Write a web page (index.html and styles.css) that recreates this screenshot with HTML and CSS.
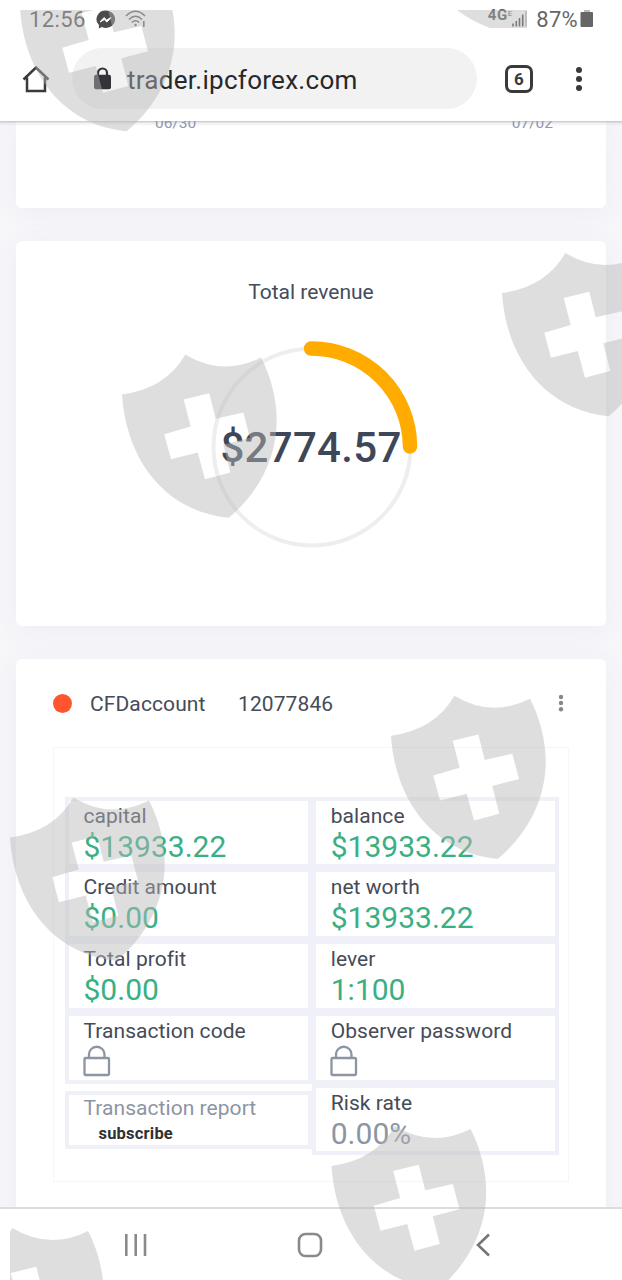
FILE: index.html
```
<!DOCTYPE html>
<html lang="en">
<head>
    <meta charset="UTF-8">
    <meta name="viewport" content="width=device-width, initial-scale=1.0">
    <title>Trader</title>
    <link rel="stylesheet" href="styles.css">
</head>
<body>
    <div class="screen">
        <!-- Status bar -->
        <div class="status-bar">
            <span class="clock">12:56</span>
            <svg class="messenger" width="19" height="19" viewBox="0 0 19 19">
                <path d="M9.5 0.5a9 8.7 0 0 0-6.6 14.6V18.5l3-1.6a9 8.7 0 1 0 3.6-16.4z" fill="#4c4c4c"/>
                <path d="M4 12l4-4.4 2.6 2.5L15 7.5l-4 4.6-2.7-2.500z" fill="#fff" stroke="#fff" stroke-width="1"/>
            </svg>
            <svg class="wifi" width="21" height="18" viewBox="0 0 21 18" fill="none" stroke="#666" stroke-width="1.600">
                <path d="M1 6q9.500-9.500 19 0M4 9.500q6.500-6.500 13 0M6.800 12.500q3.700-3.500 7.400 0"/>
                <circle cx="10.500" cy="15" r="1.200" fill="#666" stroke="none"/>
                <path d="M18.800 11v6"/>
            </svg>
            <span class="status-right">
                <span class="network"><b>4G</b><i>E</i></span>
                <svg width="15" height="16" viewBox="0 0 15 16" stroke="#484848" stroke-width="1.600">
                    <path d="M1 12.500V15.500M4.300 10V15.500M7.500 7V15.500M10.700 3.500V15.500"/>
                    <path d="M14 0V15.500" stroke="#b5b5b5"/>
                </svg>
                <span class="percent">87%</span>
                <svg width="14" height="18" viewBox="0 0 14 18">
                    <path d="M4 0h6v2H4z" fill="#bbb"/>
                    <rect x="0.500" y="2" width="12.500" height="15" rx="1" fill="#666"/>
                </svg>
            </span>
        </div>

        <!-- Browser toolbar -->
        <header class="toolbar">
            <svg class="home" width="28" height="28" viewBox="0 0 28 28" fill="none" stroke="#3a3a3a" stroke-width="2.500">
                <path d="M1.500 14.500L14 2.500l12.500 12M5 12.500V26h18V12.500"/>
            </svg>
            <div class="address">
                <svg width="17" height="23" viewBox="0 0 17 23">
                    <path d="M4 9V6a4.500 4.500 0 0 1 9 0v3" fill="none" stroke="#333438" stroke-width="2.200"/>
                    <rect x="0" y="7.700" width="17" height="14.500" rx="2" fill="#333438"/>
                </svg>
                <span class="url">trader.ipcforex.com</span>
            </div>
            <span class="tabs">6</span>
            <svg class="more" width="6" height="26" viewBox="0 0 6 26" fill="#3a3a3a">
                <circle cx="3" cy="3" r="3"/><circle cx="3" cy="12" r="3"/><circle cx="3" cy="21" r="3"/>
            </svg>
        </header>

        <main class="content">
            <section class="card chart-card">
                <span>06/30</span>
                <span>07/02</span>
            </section>

            <section class="card revenue-card">
                <h2>Total revenue</h2>
                <div class="ring">
                    <svg width="216" height="216" viewBox="0 0 216 216" fill="none">
                        <circle cx="108" cy="108" r="98.500" stroke="#eeeef0" stroke-width="4"/>
                        <path d="M107 9.500A98.500 98.500 0 0 1 206 107.500" stroke="#ffab00" stroke-width="14.500" stroke-linecap="round"/>
                    </svg>
                    <strong>$2774.57</strong>
                </div>
            </section>

            <section class="card account-card">
                <div class="account-head">
                    <span class="dot"></span>
                    <span class="account-type">CFDaccount</span>
                    <span>12077846</span>
                    <svg width="6" height="18" viewBox="0 0 6 18" fill="#87888d">
                        <circle cx="3" cy="3" r="2.200"/><circle cx="3" cy="9" r="2.200"/><circle cx="3" cy="15.200" r="2.200"/>
                    </svg>
                </div>
                <div class="account-box">
                    <div class="column">
                        <div class="cell"><span>capital</span><b>$13933.22</b></div>
                        <div class="cell"><span>Credit amount</span><b>$0.00</b></div>
                        <div class="cell"><span>Total profit</span><b>$0.00</b></div>
                        <div class="cell">
                            <span>Transaction code</span>
                            <svg class="lock" width="28" height="32" viewBox="0 0 28 32" fill="none" stroke="#8c95a3" stroke-width="2.300">
                                <rect x="1.500" y="13" width="24.500" height="17" rx="1"/>
                                <path d="M6 13V9.500a7.750 7.750 0 0 1 15.500 0V13"/>
                            </svg>
                        </div>
                        <div class="cell report"><span>Transaction report</span><a>subscribe</a></div>
                    </div>
                    <div class="column">
                        <div class="cell"><span>balance</span><b>$13933.22</b></div>
                        <div class="cell"><span>net worth</span><b>$13933.22</b></div>
                        <div class="cell"><span>lever</span><b>1:100</b></div>
                        <div class="cell">
                            <span>Observer password</span>
                            <svg class="lock" width="28" height="32" viewBox="0 0 28 32" fill="none" stroke="#8c95a3" stroke-width="2.300">
                                <rect x="1.500" y="13" width="24.500" height="17" rx="1"/>
                                <path d="M6 13V9.500a7.750 7.750 0 0 1 15.500 0V13"/>
                            </svg>
                        </div>
                        <div class="cell"><span>Risk rate</span><b class="muted">0.00%</b></div>
                    </div>
                </div>
            </section>
        </main>

        <!-- System navigation -->
        <nav class="system-nav">
            <svg width="24" height="24" viewBox="0 0 24 24" stroke="#8a8a8a" stroke-width="2.600">
                <path d="M2.300 1v22M11.700 1v22M21 1v22"/>
            </svg>
            <svg class="home-key" width="26" height="26" viewBox="0 0 26 26" fill="none" stroke="#8a8a8a" stroke-width="2.600">
                <rect x="2" y="2" width="22" height="22" rx="6.500"/>
            </svg>
            <svg width="16" height="24" viewBox="0 0 16 24" fill="none" stroke="#757575" stroke-width="2.600">
                <path d="M14 1.500L3 12l11 10.500"/>
            </svg>
        </nav>

        <!-- Shield watermark -->
        <svg class="watermark" width="622" height="1280" viewBox="0 0 622 1280">
            <defs>
                <path id="shield" fill-rule="evenodd" d="M0 40Q44 34 63.300 0Q100.700 22.500 139 3C149 22 154.700 45 154.700 66C154.700 105 135 140 106.700 163.300C42 157 4 104 0 40zM61.700 45L68.700 72L42.300 79.700L49 104.700L75.700 98L83 124.700L108.300 118L101.300 90.300L128 83.300L121.300 58L93.700 64.300L87.300 38.700z"/>
                <clipPath id="inset"><rect x="10" y="10" width="612" height="1270"/></clipPath>
            </defs>
            <g clip-path="url(#inset)">
                <use href="#shield" x="20" y="-32"/>
                <path d="M457 10H527V28H490Q471 21 457 10z"/>
                <use href="#shield" x="502" y="253"/>
                <use href="#shield" x="122" y="354.500"/>
                <use href="#shield" x="391" y="695.700"/>
                <use href="#shield" x="10" y="797.500"/>
                <use href="#shield" x="331.500" y="1126"/>
                <use href="#shield" x="-51" y="1228"/>
            </g>
        </svg>
    </div>
</body>
</html>
```

FILE: styles.css
```
* {
    box-sizing: border-box;
}

body {
    margin: 0;
    font-family: Roboto, "Liberation Sans", sans-serif;
    color: #454b57;
    background: #fff;
}

svg {
    display: block;
    flex-shrink: 0;
}

.screen {
    position: relative;
    display: flex;
    flex-direction: column;
    width: 622px;
    height: 1280px;
    overflow: hidden;
}

.status-bar {
    display: flex;
    align-items: center;
    height: 38px;
    padding: 0 28px 0 29px;
    font-size: 22px;
    color: #666;
}

.clock {
    color: #555;
    width: 67px;
    letter-spacing: 0.4px;
}

.wifi {
    margin-left: 10px;
}

.status-right {
    display: flex;
    align-items: center;
    margin-left: auto;
}

.network {
    display: flex;
    align-items: flex-start;
    height: 20px;
    margin-right: 0;
    font-size: 15px;
    line-height: 12px;
    color: #555;
}

.network b {
    letter-spacing: 0.5px;
}

.network i {
    font-size: 8px;
    line-height: 10px;
    font-style: normal;
}

.percent {
    margin: 0 2px 0 9px;
    letter-spacing: 0.3px;
}

.toolbar {
    display: flex;
    align-items: center;
    height: 83px;
    padding: 0 40px 0 22px;
}

.address {
    display: flex;
    align-items: center;
    width: 405px;
    height: 61px;
    margin-left: 22px;
    margin-bottom: 2px;
    padding-left: 22px;
    border-radius: 31px;
    background: #f2f2f2;
}

.url {
    margin-left: 16px;
    padding-top: 2px;
    font-size: 26px;
    letter-spacing: 0.28px;
    color: #27282b;
}

.tabs {
    width: 28px;
    height: 28px;
    margin-left: 28px;
    margin-bottom: 2px;
    border: 3px solid #3a3a3a;
    border-radius: 7px;
    font-size: 17px;
    font-weight: 700;
    line-height: 22px;
    text-align: center;
    color: #3a3a3a;
}

.home {
    margin-bottom: 2px;
}

.more {
    margin-left: auto;
}

.content {
    display: flex;
    flex-direction: column;
    gap: 33px;
    height: 1086px;
    padding: 0 16px;
    overflow: hidden;
    background: linear-gradient(#c4c4c6, #e8e8ec 2px, #f7f7fa 5px);
}

.card {
    flex-shrink: 0;
    border-radius: 6px;
    background: #fff;
    box-shadow: 0 4px 28px rgba(80, 80, 160, 0.07);
}

.chart-card {
    display: flex;
    justify-content: space-between;
    height: 87px;
    padding: 0 53px 0 139px;
    border-top-left-radius: 0;
    border-top-right-radius: 0;
    background: linear-gradient(#c4c4c6, #eee 2px, #fff 5px);
    font-size: 15.5px;
    line-height: 4px;
    color: #8f97b0;
}

.revenue-card {
    height: 385px;
    padding-top: 38px;
}

.revenue-card h2 {
    margin: 0;
    font-size: 21px;
    font-weight: 400;
    line-height: 26px;
    text-align: center;
}

.ring {
    display: grid;
    place-items: center;
    margin-top: 34px;
}

.ring svg,
.ring strong {
    grid-area: 1 / 1;
}

.ring svg {
    margin-left: 1px;
}

.ring strong {
    font-size: 42px;
    font-weight: 500;
    letter-spacing: 0.3px;
    color: #3e4758;
}

.account-card {
    height: 600px;
    padding: 0 37px;
    border-bottom-left-radius: 0;
    border-bottom-right-radius: 0;
}

.account-head {
    display: flex;
    align-items: center;
    height: 88px;
    font-size: 21px;
}

.account-head span:not(.dot) {
    padding-top: 1px;
    letter-spacing: 0.1px;
}

.dot {
    width: 19px;
    height: 19px;
    margin-right: 18px;
    border-radius: 50%;
    background: #ff5630;
}

.account-type {
    width: 148px;
}

.account-head svg {
    margin: 0 5px 0 auto;
}

.account-box {
    display: flex;
    height: 435px;
    padding: 48.5px 9px 0 10.5px;
    border: 1px solid #f6f6f8;
}

.column {
    flex: 1;
}

.cell {
    height: 71.8px;
    padding-left: 15px;
    border: 4px solid #f0f1f8;
}

.cell span,
.cell b {
    display: block;
}

.cell span {
    font-size: 21px;
    line-height: 30px;
    letter-spacing: 0.05px;
}

.cell b {
    font-size: 30px;
    font-weight: 400;
    line-height: 31px;
    color: #3aaf83;
}

.cell b.muted {
    color: #8c95a3;
}

.lock {
    margin: -1px 0 0 -1px;
}

.report {
    height: 58px;
    margin-top: 7px;
}

.report span {
    line-height: 26px;
    color: #8c95a3;
}

.report a {
    display: block;
    padding-left: 15px;
    font-size: 16.5px;
    font-weight: 700;
    line-height: 25px;
    letter-spacing: 0.2px;
    color: #2f3033;
}

.system-nav {
    display: flex;
    align-items: center;
    justify-content: space-between;
    height: 73px;
    padding: 0 131px 0 124px;
    border-top: 2px solid #dcdcdc;
    background: #fff;
}

.home-key {
    margin: 0 2px 0 -2px;
}

.watermark {
    position: absolute;
    top: 0;
    left: 0;
    fill: #b8b8b8;
    opacity: 0.45;
    z-index: 2;
    pointer-events: none;
}
```
